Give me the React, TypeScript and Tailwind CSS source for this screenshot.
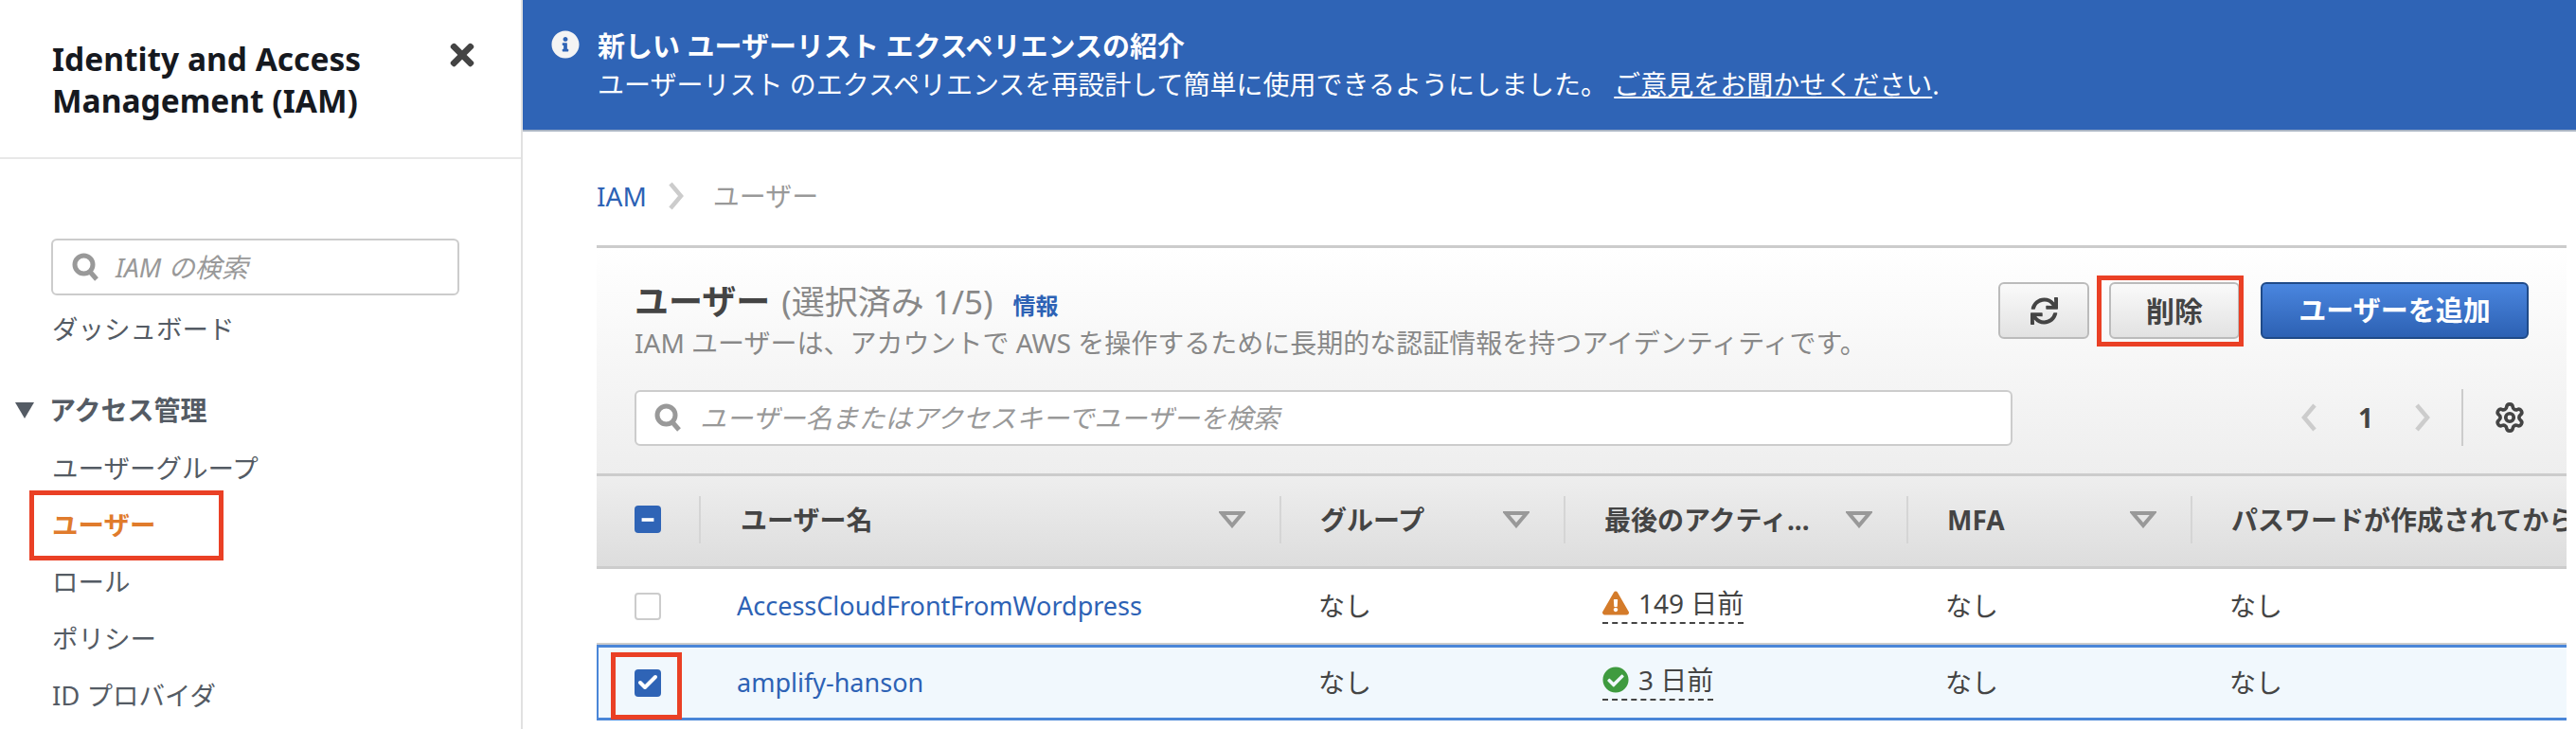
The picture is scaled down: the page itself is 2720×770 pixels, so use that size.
import { FaCheckCircle, FaExclamationTriangle, FaInfoCircle, FaSync, FaTimes } from "react-icons/fa"
import { Check, Minus, Settings } from "lucide-react"

const font = "font-['Noto_Sans','Noto_Sans_CJK_JP',sans-serif]"

function SearchIcon() {
  return (
    <svg width="28" height="30" viewBox="0 0 28 30" fill="none" stroke="#999" className="shrink-0">
      <circle cx="12.5" cy="12.5" r="9.5" strokeWidth="5" />
      <path d="M19 20 L26 28" strokeWidth="5" />
    </svg>
  )
}

function SortIcon() {
  return (
    <svg width="28" height="18" viewBox="0 0 28 18" fill="none" stroke="#999" strokeWidth="4" className="shrink-0">
      <path d="M3 2 H25 L14 15 Z" />
    </svg>
  )
}

function Chevron({ left }: { left?: boolean }) {
  return (
    <svg width="18" height="30" viewBox="0 0 18 30" fill="none" stroke="#ccc" strokeWidth="4.5" className="shrink-0">
      <path d={left ? "M15 2 L4 15 L15 28" : "M3 2 L14 15 L3 28"} />
    </svg>
  )
}

function HeaderCell({ label, width, first }: { label: string; width: string; first?: boolean }) {
  return (
    <div className={`flex items-center ${width} h-[50px] pl-[41px] pr-[36px] border-l-2 border-[#d5d5d5] ${first ? "pl-[42px]" : ""}`}>
      <span className="text-[28px] font-bold text-[#444] flex-1 whitespace-nowrap">{label}</span>
      <SortIcon />
    </div>
  )
}

function Row({ name, active, selected }: { name: string; active: React.ReactNode; selected?: boolean }) {
  return (
    <div
      className={`flex items-center h-[80px] text-[28px] text-[#444] ${
        selected ? "border-y-[3px] border-l-2 border-[#4a86d8] bg-[#f1f8fd]" : "border-b-2 border-[#ccc]"
      }`}
    >
      <div className={selected ? "w-[106px] pl-[38px]" : "w-[108px] pl-[40px]"}>
        {selected ? (
          <div className="relative w-[28px] h-[29px]">
            <div className="w-[28px] h-[29px] rounded-[4px] bg-[#2f64b6] flex items-center justify-center">
              <Check size={24} color="#fff" strokeWidth={4} />
            </div>
            <div className="absolute -left-[25px] -top-[18px] w-[75px] h-[71px] border-[5px] border-[#ea4025]" />
          </div>
        ) : (
          <div className="w-[28px] h-[29px] rounded-[4px] border-2 border-[#ccc] bg-white" />
        )}
      </div>
      <div className="w-[613px] pl-[40px] text-[27px] text-[#2d62b5]">{name}</div>
      <div className="w-[300px] pl-[41px]">なし</div>
      <div className="w-[362px] pl-[41px]">{active}</div>
      <div className="w-[300px] pl-[41px]">なし</div>
      <div className="flex-1 pl-[41px]">なし</div>
    </div>
  )
}

function Activity({ icon, text }: { icon: React.ReactNode; text: string }) {
  return (
    <span className="inline-flex items-center gap-[10px] border-b-2 border-dashed border-[#444] leading-[36px] pb-[2px]">
      {icon}
      {text}
    </span>
  )
}

export default function App() {
  return (
    <div className={`flex w-[2720px] h-[770px] overflow-hidden bg-white ${font}`}>
      <aside className="w-[552px] shrink-0 border-r-2 border-[#e1e1e1]">
        <div className="h-[168px] border-b-2 border-[#e8e8e8] pl-[55px] pr-[44px] pt-[40px] flex justify-between">
          <h1 className="text-[33.5px] leading-[44px] font-bold text-[#16191f]">
            Identity and Access
            <br />
            Management (IAM)
          </h1>
          <FaTimes size={36} color="#444" />
        </div>
        <div className="ml-[54px] mt-[84px] w-[431px] h-[60px] rounded-[6px] border-2 border-[#ccc] flex items-center pl-[20px] gap-[18px]">
          <SearchIcon />
          <span className="italic text-[28px] text-[#999]">IAM の検索</span>
        </div>
        <div className="pl-[55px] mt-[16px] text-[27.5px] leading-[40px] text-[#545b64]">ダッシュボード</div>
        <div className="flex items-center pl-[16px] mt-[45px] h-[40px] gap-[16px]">
          <svg width="20" height="17" viewBox="0 0 20 17" fill="#545b64">
            <path d="M0 0 H20 L10 17 Z" />
          </svg>
          <span className="text-[28px] font-bold text-[#545b64]">アクセス管理</span>
        </div>
        <nav className="pl-[55px] mt-[22px] flex flex-col gap-[20px] text-[27.5px] leading-[40px] text-[#545b64]">
          <div>ユーザーグループ</div>
          <div className="relative font-bold text-[#e07b2c]">
            ユーザー
            <div className="absolute -left-[24px] -top-[17px] w-[205px] h-[74px] border-[5px] border-[#ea4025]" />
          </div>
          <div>ロール</div>
          <div>ポリシー</div>
          <div>ID プロバイダ</div>
        </nav>
      </aside>

      <main className="flex-1 min-w-0">
        <div className="h-[139px] bg-[#2f64b6] border-b-2 border-[#a9b4c4] flex pl-[30px] pt-[28px] text-white">
          <FaInfoCircle size={30} color="#f4f4f4" className="mt-[4px] shrink-0" />
          <div className="ml-[19px] leading-[41px]">
            <div className="text-[29px] font-bold">新しい ユーザーリスト エクスペリエンスの紹介</div>
            <div className="text-[28px]">
              ユーザーリスト のエクスペリエンスを再設計して簡単に使用できるようにしました。{" "}
              <span className="underline">ご意見をお聞かせください</span>.
            </div>
          </div>
        </div>

        <div className="flex items-center pl-[78px] h-[120px] pt-[16px] text-[28px]">
          <span className="text-[#2d62b5]">IAM</span>
          <span className="ml-[22px]">
            <Chevron />
          </span>
          <span className="ml-[30px] text-[#999]">ユーザー</span>
        </div>

        <section className="ml-[78px] mr-[10px] border-t-[3px] border-[#ccc]">
          <div className="h-[241px] bg-gradient-to-b from-white to-[#eee] border-b-[3px] border-[#ccc] pl-[40px] pr-[40px] pt-[35px]">
            <div className="flex justify-between h-[114px]">
              <div>
                <div className="flex items-baseline leading-[44px]">
                  <span className="text-[36px] font-bold text-[#444]">ユーザー</span>
                  <span className="text-[35px] text-[#888] ml-[12px]">(選択済み 1/5)</span>
                  <span className="text-[24px] font-bold text-[#2d62b5] ml-[21px]">情報</span>
                </div>
                <div className="text-[28px] leading-[34px] text-[#888]">
                  IAM ユーザーは、アカウントで AWS を操作するために長期的な認証情報を持つアイデンティティです。
                </div>
              </div>
              <div className="flex items-start pt-px">
                <button className="w-[96px] h-[60px] rounded-[6px] border-2 border-[#bbb] bg-gradient-to-b from-[#fafafa] to-[#e2e2e2] flex items-center justify-center">
                  <FaSync size={29} color="#444" />
                </button>
                <div className="relative ml-[21px]">
                  <button className="w-[138px] h-[60px] rounded-[6px] border-2 border-[#bbb] bg-gradient-to-b from-[#fafafa] to-[#e2e2e2] text-[30px] font-bold text-[#444]">
                    削除
                  </button>
                  <div className="absolute -left-[13px] -top-[7px] w-[155px] h-[75px] border-[5px] border-[#ea4025]" />
                </div>
                <button className="ml-[22px] w-[283px] h-[60px] rounded-[6px] border-2 border-[#1f4a88] bg-gradient-to-b from-[#4a86df] to-[#2d61b3] text-[29px] font-bold text-white">
                  ユーザーを追加
                </button>
              </div>
            </div>
            <div className="flex items-center">
              <div className="w-[1455px] h-[59px] rounded-[6px] border-2 border-[#ccc] bg-white flex items-center pl-[19px] gap-[20px]">
                <SearchIcon />
                <span className="italic text-[28px] text-[#999]">ユーザー名またはアクセスキーでユーザーを検索</span>
              </div>
              <span className="ml-[304px]">
                <Chevron left />
              </span>
              <span className="w-[102px] text-center text-[28px] font-bold text-[#444]">1</span>
              <Chevron />
              <div className="ml-[32px] h-[60px] border-l-2 border-[#ccc]" />
              <Settings size={34} color="#444" strokeWidth={2.6} className="ml-[32px]" />
            </div>
          </div>

          <div className="h-[98px] bg-gradient-to-b from-[#eee] to-[#ddd] border-b-[3px] border-[#ccc] flex items-center pb-[4px]">
            <div className="w-[108px] h-[50px] pl-[40px] flex items-center">
              <div className="w-[28px] h-[29px] rounded-[4px] bg-[#2f64b6] flex items-center justify-center">
                <Minus size={22} color="#fff" strokeWidth={4} strokeLinecap="butt" />
              </div>
            </div>
            <HeaderCell label="ユーザー名" width="w-[613px]" first />
            <HeaderCell label="グループ" width="w-[300px]" />
            <HeaderCell label="最後のアクティ..." width="w-[362px]" />
            <HeaderCell label="MFA" width="w-[300px]" />
            <div className="flex items-center h-[50px] pl-[41px] border-l-2 border-[#d5d5d5] flex-1 min-w-0 overflow-hidden">
              <span className="text-[28px] font-bold text-[#444] whitespace-nowrap">パスワードが作成されてから</span>
            </div>
          </div>

          <Row
            name="AccessCloudFrontFromWordpress"
            active={<Activity icon={<FaExclamationTriangle size={28} color="#d47b2a" />} text="149 日前" />}
          />
          <Row
            name="amplify-hanson"
            selected
            active={<Activity icon={<FaCheckCircle size={28} color="#3f9b3f" />} text="3 日前" />}
          />
        </section>
      </main>
    </div>
  )
}
